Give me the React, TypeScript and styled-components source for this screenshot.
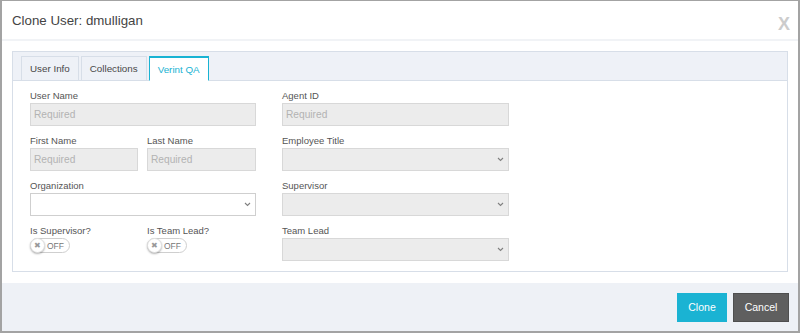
import React from 'react';
import styled, { createGlobalStyle } from 'styled-components';

const GlobalStyle = createGlobalStyle`
  html, body {
    margin: 0;
    padding: 0;
    background: #ffffff;
  }
  * {
    box-sizing: border-box;
  }
`;

const Modal = styled.div`
  width: 800px;
  height: 333px;
  display: flex;
  flex-direction: column;
  border: 1px solid #a3a3a3;
  border-left-width: 2px;
  border-right-width: 2px;
  border-bottom-width: 2px;
  background: #ffffff;
  font-family: 'Liberation Sans', Arial, sans-serif;
  color: #333;
`;

const Header = styled.div`
  height: 40px;
  flex: none;
  display: flex;
  align-items: center;
  justify-content: space-between;
  padding: 0 8px 0 10px;
  border-bottom: 2px solid #f1f3f6;
`;

const Title = styled.h1`
  margin: 0;
  font-size: 13.3px;
  font-weight: normal;
  color: #444;
`;

const Close = styled.span`
  font-size: 18px;
  font-weight: bold;
  color: #cccccc;
  margin-top: 7px;
  line-height: 1;
`;

const Body = styled.div`
  flex: 1;
  padding: 10px 10px 11px 10px;
`;

const Panel = styled.div`
  height: 100%;
  border: 1px solid #d7dee8;
  display: flex;
  flex-direction: column;
`;

const TabStrip = styled.div`
  height: 29px;
  flex: none;
  display: flex;
  align-items: flex-end;
  gap: 2px;
  padding-left: 8px;
  background: #eef1f7;
  border-bottom: 1px solid #d7dee8;
`;

const Tab = styled.div<{ $active?: boolean }>`
  height: 25px;
  margin-bottom: -1px;
  padding: 0 8px;
  display: flex;
  align-items: center;
  font-size: 9.8px;
  color: ${(p) => (p.$active ? '#19b3d3' : '#484848')};
  background: ${(p) => (p.$active ? '#ffffff' : '#eef1f7')};
  border: 1px solid ${(p) => (p.$active ? '#19b3d3' : '#d7dee8')};
  border-top-width: ${(p) => (p.$active ? 2 : 1)}px;
  border-bottom: ${(p) => (p.$active ? '1px solid #ffffff' : '1px solid #d7dee8')};
`;

const Content = styled.div`
  flex: 1;
  display: grid;
  grid-template-columns: 226px 227px;
  column-gap: 26px;
  padding: 8px 17px 0 17px;
`;

const Column = styled.div`
  display: flex;
  flex-direction: column;
  gap: 8px;
`;

const Pair = styled.div`
  display: grid;
  grid-template-columns: 108px 109px;
  column-gap: 9px;
`;

const Field = styled.div`
  display: flex;
  flex-direction: column;
`;

const Label = styled.label`
  height: 14px;
  line-height: 14px;
  font-size: 9.5px;
  color: #555;
`;

const Input = styled.input`
  height: 23px;
  width: 100%;
  margin: 0;
  padding: 0 3px;
  border: 1px solid #d8d8d8;
  background: #ececec;
  font-family: 'Liberation Sans', Arial, sans-serif;
  font-size: 10.2px;
  color: #333;
  outline: none;
  &::placeholder {
    color: #b3b3b3;
  }
`;

const Select = styled.div<{ $plain?: boolean }>`
  height: 23px;
  display: flex;
  align-items: center;
  justify-content: flex-end;
  padding-right: 4px;
  border: 1px solid ${(p) => (p.$plain ? '#cfcfcf' : '#d8d8d8')};
  background: ${(p) => (p.$plain ? '#ffffff' : '#ececec')};
`;

const ToggleWrap = styled.div`
  width: 40px;
  height: 15px;
  border: 1px solid #cfcfcf;
  border-radius: 8px;
  background: #fff;
  position: relative;
  display: flex;
  align-items: center;
  justify-content: flex-end;
  padding-right: 5px;
`;

const Knob = styled.span`
  position: absolute;
  left: -1px;
  top: -1px;
  width: 15px;
  height: 15px;
  border-radius: 50%;
  background: #fff;
  border: 1px solid #e0e0e0;
  box-shadow: 0 1px 2px rgba(0, 0, 0, 0.3);
  display: flex;
  align-items: center;
  justify-content: center;
  font-size: 8px;
  color: #999;
`;

const ToggleText = styled.span`
  font-size: 8.5px;
  color: #777;
`;

const Footer = styled.div`
  height: 48px;
  flex: none;
  display: flex;
  align-items: center;
  justify-content: flex-end;
  gap: 6px;
  padding-right: 9px;
  background: #eef1f6;
`;

const Button = styled.button<{ $variant: 'primary' | 'dark' }>`
  height: 29px;
  width: ${(p) => (p.$variant === 'primary' ? 50 : 56)}px;
  padding: 0;
  border: 1px solid ${(p) => (p.$variant === 'primary' ? '#1ab3d3' : '#4f4f4f')};
  background: ${(p) => (p.$variant === 'primary' ? '#1ab3d3' : '#5f5f5f')};
  color: #fff;
  font-family: 'Liberation Sans', Arial, sans-serif;
  font-size: 10.5px;
  cursor: pointer;
`;

const Chevron = () => (
  <svg width="7" height="5" viewBox="0 0 7 5">
    <path d="M1 1 L3.5 3.5 L6 1" fill="none" stroke="#808080" strokeWidth="1.1" />
  </svg>
);

const Toggle = () => (
  <ToggleWrap>
    <Knob>✖</Knob>
    <ToggleText>OFF</ToggleText>
  </ToggleWrap>
);

const TextField = ({ label }: { label: string }) => (
  <Field>
    <Label>{label}</Label>
    <Input placeholder="Required" />
  </Field>
);

const SelectField = ({ label, plain }: { label: string; plain?: boolean }) => (
  <Field>
    <Label>{label}</Label>
    <Select $plain={plain}>
      <Chevron />
    </Select>
  </Field>
);

const ToggleField = ({ label }: { label: string }) => (
  <Field>
    <Label>{label}</Label>
    <Toggle />
  </Field>
);

const tabs = ['User Info', 'Collections', 'Verint QA'];

export default function App() {
  return (
    <>
      <GlobalStyle />
      <Modal>
        <Header>
          <Title>Clone User: dmulligan</Title>
          <Close>X</Close>
        </Header>
        <Body>
          <Panel>
            <TabStrip>
              {tabs.map((t) => (
                <Tab key={t} $active={t === 'Verint QA'}>
                  {t}
                </Tab>
              ))}
            </TabStrip>
            <Content>
              <Column>
                <TextField label="User Name" />
                <Pair>
                  <TextField label="First Name" />
                  <TextField label="Last Name" />
                </Pair>
                <SelectField label="Organization" plain />
                <Pair>
                  <ToggleField label="Is Supervisor?" />
                  <ToggleField label="Is Team Lead?" />
                </Pair>
              </Column>
              <Column>
                <TextField label="Agent ID" />
                <SelectField label="Employee Title" />
                <SelectField label="Supervisor" />
                <SelectField label="Team Lead" />
              </Column>
            </Content>
          </Panel>
        </Body>
        <Footer>
          <Button $variant="primary">Clone</Button>
          <Button $variant="dark">Cancel</Button>
        </Footer>
      </Modal>
    </>
  );
}
